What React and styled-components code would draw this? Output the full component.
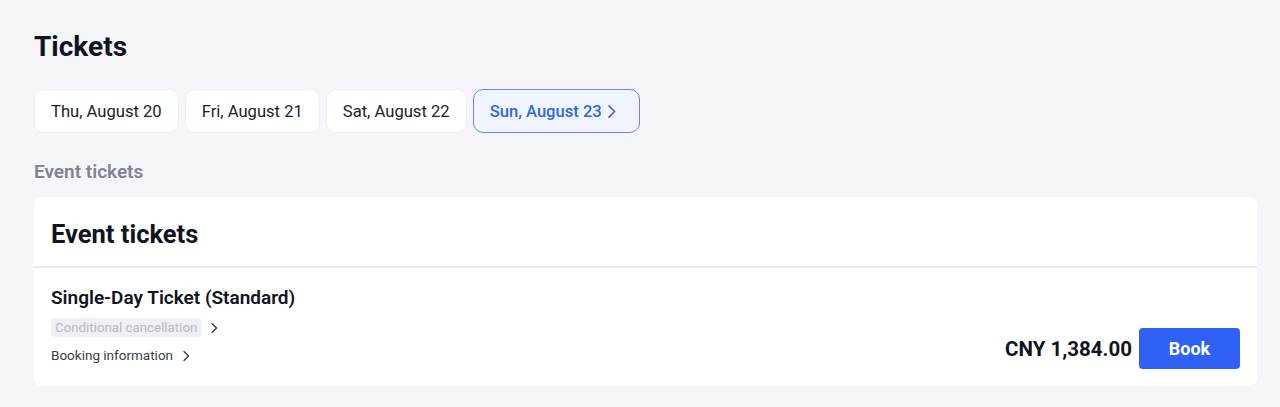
import React from "react";
import styled, { createGlobalStyle } from "styled-components";

const GlobalStyle = createGlobalStyle`
  body {
    margin: 0;
    background: #f5f6fa;
    font-family: Roboto, "Noto Sans", sans-serif;
    color: #0f1420;
  }
`;

const dates = [
  { label: "Thu, August 20" },
  { label: "Fri, August 21" },
  { label: "Sat, August 22" },
  { label: "Sun, August 23", active: true },
];

const Chevron = ({ size = 12, color = "currentColor" }) => (
  <svg width={size} height={size} viewBox="0 0 12 12" fill="none">
    <path
      d="M4 1.5 L8.5 6 L4 10.5"
      stroke={color}
      strokeWidth="1.3"
      strokeLinecap="round"
      strokeLinejoin="round"
    />
  </svg>
);

const App = () => {
  return (
    <Page>
      <GlobalStyle />
      <Title>Tickets</Title>
      <DateRow>
        {dates.map((d) => (
          <DateTab key={d.label} $active={d.active}>
            {d.label}
            {d.active && <Chevron size={15} />}
          </DateTab>
        ))}
      </DateRow>
      <SectionLabel>Event tickets</SectionLabel>
      <Card>
        <CardHeader>Event tickets</CardHeader>
        <TicketRow>
          <TicketInfo>
            <TicketName>Single-Day Ticket (Standard)</TicketName>
            <LinkLine>
              <Tag>Conditional cancellation</Tag>
              <Chevron size={12} color="#30343c" />
            </LinkLine>
            <LinkLine>
              <InfoText>Booking information</InfoText>
              <Chevron size={12} color="#30343c" />
            </LinkLine>
          </TicketInfo>
          <PriceBox>
            <Price>CNY 1,384.00</Price>
            <BookButton>Book</BookButton>
          </PriceBox>
        </TicketRow>
      </Card>
    </Page>
  );
};

const Page = styled.div`
  padding: 30px 23px 20px 34px;
`;

const Title = styled.h1`
  margin: 0;
  font-size: 28px;
  line-height: 34px;
  font-weight: 700;
  color: #0f1420;
`;

const DateRow = styled.div`
  display: flex;
  gap: 6px;
  margin-top: 25px;
`;

const DateTab = styled.button`
  height: 44px;
  padding: 0 ${(p) => (p.$active ? "20px" : "16px")} 0 16px;
  display: flex;
  align-items: center;
  gap: 2px;
  border-radius: 10px;
  font-family: inherit;
  font-size: 16.6px;
  font-weight: ${(p) => (p.$active ? 500 : 400)};
  color: ${(p) => (p.$active ? "#3166e6" : "#1a1e26")};
  background: ${(p) => (p.$active ? "#f1f5ff" : "#ffffff")};
  border: 1px solid ${(p) => (p.$active ? "#5f8ae8" : "#eceef2")};
  cursor: pointer;
`;

const SectionLabel = styled.div`
  margin-top: 28px;
  font-size: 19px;
  line-height: 22px;
  font-weight: 600;
  color: #7d8492;
`;

const Card = styled.div`
  margin-top: 14px;
  background: #ffffff;
  border-radius: 8px;
  overflow: hidden;
`;

const CardHeader = styled.div`
  height: 71px;
  padding: 4px 17px 0;
  display: flex;
  align-items: center;
  font-size: 25.5px;
  font-weight: 700;
  color: #0f1420;
  border-bottom: 2px solid #e8eaee;
  box-sizing: border-box;
`;

const TicketRow = styled.div`
  display: flex;
  justify-content: space-between;
  align-items: flex-end;
  padding: 19px 17px 21px;
`;

const TicketInfo = styled.div`
  display: flex;
  flex-direction: column;
`;

const TicketName = styled.div`
  font-size: 19px;
  line-height: 22px;
  font-weight: 600;
  color: #0f1420;
`;

const LinkLine = styled.div`
  display: flex;
  align-items: center;
  gap: 7px;
  margin-top: 9px;
`;

const Tag = styled.span`
  background: #eef0f3;
  color: #b6bac2;
  font-size: 13.3px;
  line-height: 19px;
  padding: 0 4px;
  border-radius: 2px;
`;

const InfoText = styled.span`
  color: #3b404a;
  font-size: 13.5px;
  line-height: 19px;
`;

const PriceBox = styled.div`
  display: flex;
  align-items: center;
  gap: 7px;
  margin-bottom: -4px;
`;

const Price = styled.div`
  font-size: 20.5px;
  font-weight: 700;
  color: #0f1420;
`;

const BookButton = styled.button`
  width: 101px;
  height: 41px;
  border: none;
  border-radius: 4px;
  background: #2f61f5;
  color: #ffffff;
  font-family: inherit;
  font-size: 18px;
  font-weight: 700;
  cursor: pointer;
`;

export default App;
